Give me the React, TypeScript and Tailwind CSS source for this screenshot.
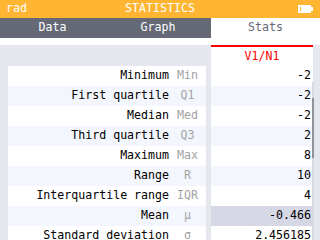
const rows: { label: string; abbr: string; value: string }[] = [
  { label: "Minimum", abbr: "Min", value: "-2" },
  { label: "First quartile", abbr: "Q1", value: "-2" },
  { label: "Median", abbr: "Med", value: "-2" },
  { label: "Third quartile", abbr: "Q3", value: "2" },
  { label: "Maximum", abbr: "Max", value: "8" },
  { label: "Range", abbr: "R", value: "10" },
  { label: "Interquartile range", abbr: "IQR", value: "4" },
  { label: "Mean", abbr: "μ", value: "-0.466" },
  { label: "Standard deviation", abbr: "σ", value: "2.456185" },
];

function Battery() {
  return (
    <svg width="15" height="8" viewBox="0 0 15 8" className="block">
      <rect x="0" y="0" width="13" height="8" fill="#fff" />
      <rect x="2" y="2" width="1" height="4" fill="#ffb531" />
      <rect x="13" y="2" width="2" height="4" fill="#fff" />
    </svg>
  );
}

export default function App() {
  return (
    <div className="relative flex h-[240px] w-[320px] flex-col overflow-hidden bg-[#e5e7ef] font-['DejaVu_Sans_Mono',monospace] text-[11.6px] leading-none">
      <div className="relative flex h-[18px] shrink-0 items-center bg-[#ffb531] text-white">
        <span className="pl-[6px]">rad</span>
        <span className="absolute left-0 right-0 text-center">STATISTICS</span>
        <div className="ml-auto pr-[7px]">
          <Battery />
        </div>
      </div>

      <div className="flex h-[20px] shrink-0 items-center text-center">
        <div className="flex h-full w-[105px] items-center justify-center bg-[#656975] text-white">Data</div>
        <div className="flex h-full w-[106px] items-center justify-center bg-[#656975] text-white">Graph</div>
        <div className="flex h-full flex-1 items-center justify-center bg-white text-[#656975]">Stats</div>
      </div>
      <div className="h-[7px] shrink-0 bg-white" />

      <div className="flex shrink-0 pl-[8px]">
        <div className="flex w-[198px] flex-col">
          <div className="h-[21px] shrink-0" />
          {rows.map((r, i) => (
            <div
              key={r.label}
              className={`flex h-[20px] shrink-0 items-center ${i % 2 === 0 ? "bg-white" : "bg-[#f3f6fd]"}`}
            >
              <span className="w-[161px] text-right text-black">{r.label}</span>
              <span className="w-[37px] text-center text-[#a3a3a3]">{r.abbr}</span>
            </div>
          ))}
        </div>
        <div className="ml-[5px] flex w-[102px] flex-col">
          <div className="flex h-[21px] shrink-0 items-center justify-center border-t-2 border-[#ff0000] bg-white text-[#ff0000]">
            V1/N1
          </div>
          {rows.map((r, i) => (
            <div
              key={r.label}
              className={`flex h-[20px] shrink-0 items-center justify-end pr-[2px] text-black ${
                r.label === "Mean" ? "bg-[#d6d8e6]" : i % 2 === 0 ? "bg-white" : "bg-[#f3f6fd]"
              }`}
            >
              {r.value}
            </div>
          ))}
        </div>
      </div>

      <div className="absolute left-[312px] top-[82px] h-[158px] w-[2px] bg-[#d8dae2]" />
      <div className="absolute left-[312px] top-[98px] h-[60px] w-[2px] bg-[#8e929c]" />
    </div>
  );
}
